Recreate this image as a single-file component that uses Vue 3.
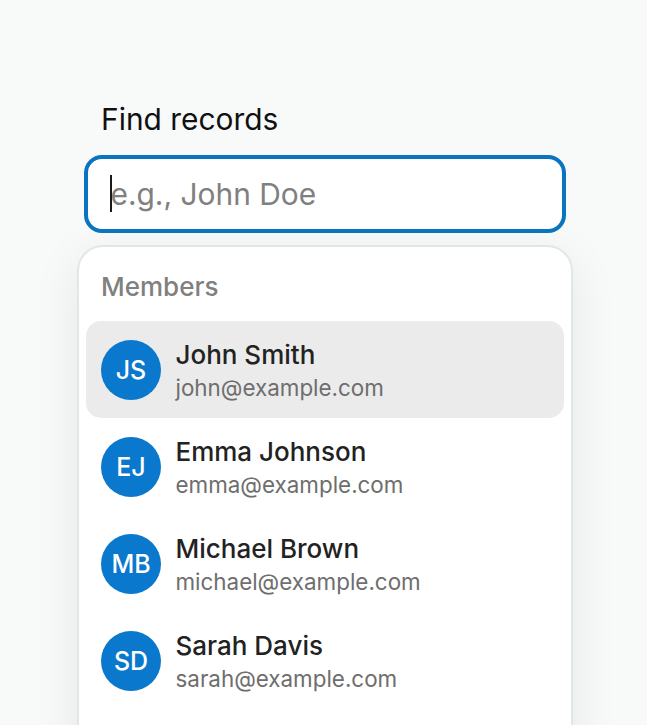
<template>
  <div class="page">
    <div class="search">
      <label class="label" for="find">Find records</label>
      <div class="input-wrap">
        <input id="find" class="input" type="text" placeholder="e.g., John Doe" />
        <span class="caret"></span>
      </div>
      <div class="dropdown">
        <div class="group-title">Members</div>
        <div
          v-for="(member, i) in members"
          :key="member.email"
          class="member"
          :class="{ active: i === 0 }"
        >
          <div class="avatar">{{ member.initials }}</div>
          <div class="info">
            <div class="name">{{ member.name }}</div>
            <div class="email">{{ member.email }}</div>
          </div>
        </div>
      </div>
    </div>
  </div>
</template>

<script setup>
const members = [
  { initials: 'JS', name: 'John Smith', email: 'john@example.com' },
  { initials: 'EJ', name: 'Emma Johnson', email: 'emma@example.com' },
  { initials: 'MB', name: 'Michael Brown', email: 'michael@example.com' },
  { initials: 'SD', name: 'Sarah Davis', email: 'sarah@example.com' }
]
</script>

<style>
html,
body {
  margin: 0;
  height: 100%;
  overflow: hidden;
  background: #f8fafa;
}
</style>

<style scoped>
.page {
  height: 725px;
  overflow: hidden;
  padding-top: 101px;
  box-sizing: border-box;
  font-family: Inter, "Liberation Sans", sans-serif;
}

.search {
  width: 496px;
  margin-left: 77px;
}

.label {
  display: block;
  margin: 0 0 17px 24px;
  font-size: 29.9px;
  line-height: 37px;
  color: #111;
}

.input-wrap {
  position: relative;
  width: 482px;
  height: 78px;
  margin-left: 7px;
}

.input {
  display: block;
  width: 100%;
  height: 100%;
  box-sizing: border-box;
  padding: 0 22.5px;
  border: 4px solid #0a74c0;
  border-radius: 18px;
  outline: none;
  background: #fff;
  font-family: inherit;
  font-size: 29.9px;
  color: #111;
}

.input::placeholder {
  color: #808080;
  opacity: 1;
}

.caret {
  position: absolute;
  left: 26px;
  top: 20px;
  width: 2px;
  height: 37px;
  background: #1a1a1a;
}

.dropdown {
  margin-top: 12px;
  padding: 22px 7px 0;
  height: 600px;
  box-sizing: border-box;
  background: #fff;
  border: 2px solid #e3e6e6;
  border-radius: 26px;
  box-shadow: 0 12px 48px rgba(0, 0, 0, 0.08);
}

.group-title {
  margin: 0 0 16px 15px;
  font-size: 26px;
  line-height: 36px;
  font-weight: 500;
  color: #808080;
}

.member {
  display: flex;
  align-items: center;
  gap: 15px;
  height: 97px;
  padding: 0 15px;
  border-radius: 15px;
}

.member.active {
  background: #ebebeb;
}

.avatar {
  width: 60px;
  height: 60px;
  flex-shrink: 0;
  display: flex;
  align-items: center;
  justify-content: center;
  border-radius: 50%;
  background: #0a78cc;
  color: #fff;
  font-size: 25px;
  font-weight: 500;
}

.info {
  margin-left: -0.5px;
  padding-top: 3px;
}

.name {
  font-size: 26px;
  line-height: 34px;
  font-weight: 500;
  color: #222;
}

.email {
  font-size: 22.4px;
  line-height: 32px;
  color: #6e6e6e;
}
</style>
